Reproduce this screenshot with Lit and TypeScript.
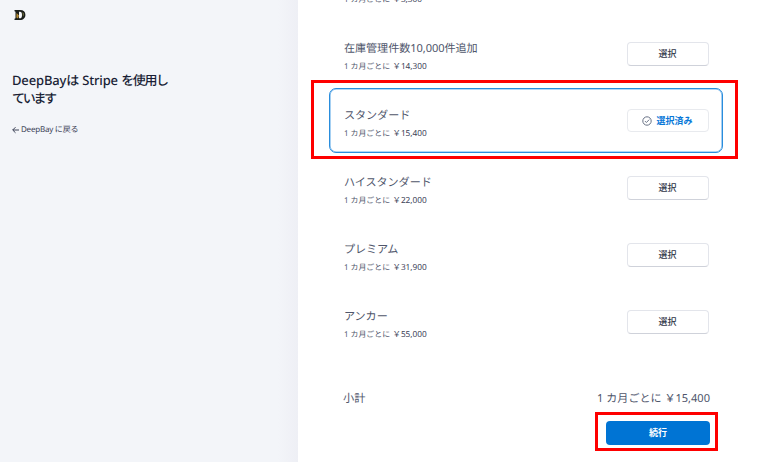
import { LitElement, html, css, svg } from "lit";
import { customElement } from "lit/decorators.js";
import { classMap } from "lit/directives/class-map.js";

interface Plan {
  name: string;
  price: string;
  selected?: boolean;
}

const PLANS: Plan[] = [
  { name: "", price: "￥3,300" },
  { name: "在庫管理件数10,000件追加", price: "￥14,300" },
  { name: "スタンダード", price: "￥15,400", selected: true },
  { name: "ハイスタンダード", price: "￥22,000" },
  { name: "プレミアム", price: "￥31,900" },
  { name: "アンカー", price: "￥55,000" },
];

@customElement("app-root")
export class AppRoot extends LitElement {
  static styles = css`
    :host {
      display: flex;
      position: relative;
      width: 780px;
      height: 462px;
      overflow: hidden;
      background: #fff;
      color: #4f566b;
      font-family: "Noto Sans", "Noto Sans CJK JP", sans-serif;
      text-rendering: geometricPrecision;
    }
    * { box-sizing: border-box; }
    .side {
      width: 298px;
      flex: none;
      padding: 9px 0 0 12px;
      background: linear-gradient(to right, #f3f5f9 0, #f3f5f9 278px, #eeeff5 298px);
      color: #1a1f36;
    }
    .logo { display: block; width: 14px; height: 12px; margin-left: 2px; }
    h1 {
      margin: 50px 0 0;
      width: 160px;
      font-size: 13px;
      line-height: 18px;
      font-weight: 500;
      white-space: nowrap;
      letter-spacing: -0.15px;
    }
    .kana { letter-spacing: -1.35px; }
    .ha { margin-right: 1px; }
    .tight { letter-spacing: -2.3px; }
    .back {
      display: flex;
      align-items: center;
      gap: 2px;
      margin-top: 17px;
      font-size: 8px;
      line-height: 12px;
      letter-spacing: -0.22px;
      color: #3c4257;
      white-space: nowrap;
    }
    .back svg { width: 7px; height: 7px; }
    .main {
      width: 394px;
      margin-left: 31px;
      flex: none;
    }
    .plans { margin-top: -46px; }
    .plan {
      display: flex;
      justify-content: space-between;
      align-items: center;
      height: 65px;
      margin-bottom: 2.2px;
      padding: 0 13.5px 0 14px;
      border: 1px solid transparent;
      border-radius: 7px;
    }
    .plan.selected {
      border-color: #298ddd;
      box-shadow: inset 0 0 0 0.6px #6bb0e9;
    }
    .info { padding-top: 3px; }
    .name {
      height: 18px;
      font-size: 11.1px;
      line-height: 18px;
      margin-top: 2px;
      letter-spacing: -0.06px;
      white-space: nowrap;
    }
    .term {
      font-size: 7.9px;
      line-height: 12px;
      margin-top: 3px;
      white-space: nowrap;
    }
    .price { font-size: 8.3px; color: #3c4257; margin-left: 0.5px; }
    .pick {
      display: flex;
      align-items: center;
      justify-content: center;
      gap: 4px;
      width: 82px;
      height: 24px;
      padding: 0;
      border: 1px solid #e3e5eb;
      border-bottom-color: #cfd2da;
      border-radius: 4px;
      background: #fff;
      font: 500 9px/12px "Noto Sans", "Noto Sans CJK JP", sans-serif;
      color: #2f3547;
    }
    .pick.on {
      height: 23px;
      border-color: #e8eaee;
      color: #0878d8;
      font-weight: 700;
    }
    .pick svg { width: 10px; height: 10px; }
    .total {
      display: flex;
      justify-content: space-between;
      margin-top: 34.6px;
      padding: 0 13px 0 14px;
      font-size: 11.2px;
      line-height: 18px;
      white-space: nowrap;
    }
    .amount { font-size: 11.05px; }
    .go {
      display: block;
      width: 104px;
      height: 24px;
      margin: 13.9px 13px 0 auto;
      padding: 0;
      border: 0;
      border-radius: 4px;
      background: #0074d4;
      color: #fff;
      font: 700 9px/24px "Noto Sans", "Noto Sans CJK JP", sans-serif;
    }
    .mark { position: absolute; border: 3px solid #fe0000; pointer-events: none; }
    .mark-plan { left: 311px; top: 80px; width: 427px; height: 79px; }
    .mark-go { left: 595px; top: 412px; width: 123px; height: 39px; }
  `;

  private check = svg`<svg viewBox="0 0 10 10" fill="none" stroke="#697386" stroke-width="1">
    <circle cx="5" cy="5" r="4.2"/><path d="M3 5.1 4.4 6.5 7.2 3.6"/></svg>`;

  private renderPlan(p: Plan) {
    return html`<div class=${classMap({ plan: true, selected: !!p.selected })}>
      <div class="info">
        <div class="name">${p.name}</div>
        <div class="term">1 カ月ごとに <span class="price">${p.price}</span></div>
      </div>
      <button class=${classMap({ pick: true, on: !!p.selected })}>${p.selected ? this.check : ""}${p.name ? (p.selected ? "選択済み" : "選択") : ""}</button>
    </div>`;
  }

  render() {
    return html`
      <aside class="side">
        <svg class="logo" viewBox="0 0 14 12">
          <path fill="#191c19" fill-rule="evenodd" d="M.5 1H6C9.600 1 11.400 2.900 11.400 5.700 11.400 8.900 9.400 11 5.800 11H.5V9.800L1.500 9.300V2.700L.5 2.200ZM5 2.800V9.300H6C7.400 9.300 8 8.100 8 5.900 8 3.900 7.400 2.800 6 2.800Z"/>
          <path fill="#b58b35" d="M2.600 4 5 6.500 4 9.600 2.300 8.500Z"/>
          <path fill="#6b6939" d="M8.500 3 10 4.500 9.500 7.500 8.800 7Z"/>
        </svg>
        <h1>DeepBay<span class="kana ha">は</span> Stripe <span class="kana">を使用し</span><br /><span class="tight">ています</span></h1>
        <div class="back">
          <svg viewBox="0 0 7 7" fill="none" stroke="#3c4257" stroke-width="1"><path d="M7 3H.8M3.500.2.700 3l2.800 2.800"/></svg>
          <span>DeepBay に戻る</span>
        </div>
      </aside>
      <main class="main">
        <div class="plans">${PLANS.map((p) => this.renderPlan(p))}</div>
        <div class="total"><span>小計</span><span class="amount">1 カ月ごとに ￥15,400</span></div>
        <button class="go">続行</button>
      </main>
      <div class="mark mark-plan"></div>
      <div class="mark mark-go"></div>
    `;
  }
}
